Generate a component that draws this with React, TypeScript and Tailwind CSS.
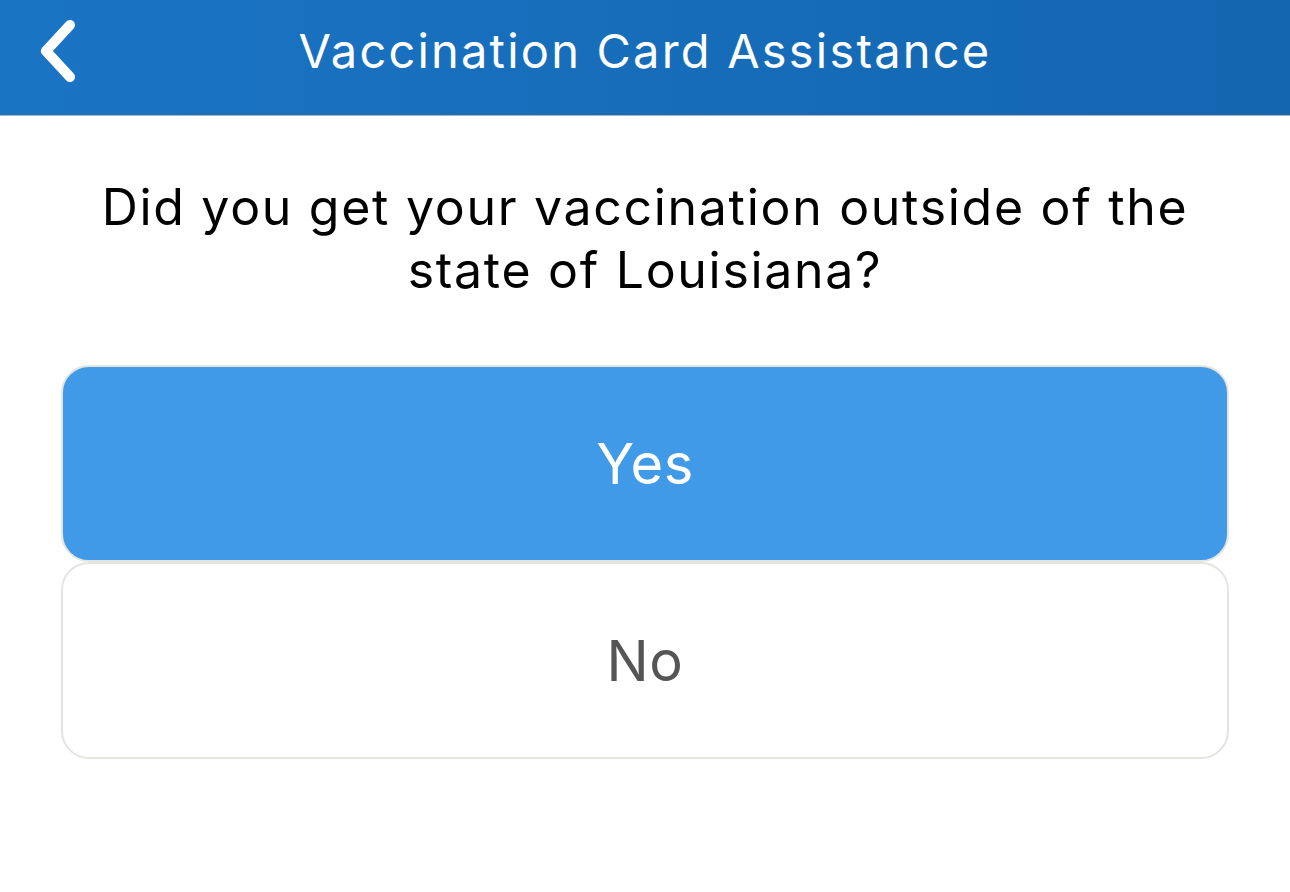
import React from "react";

const font = { fontFamily: "Inter, 'Noto Sans', sans-serif" };

function BackChevron() {
  return (
    <svg width="40" height="64" viewBox="0 0 40 64" fill="none" aria-hidden="true">
      <path
        d="M32 6 L8 32 L32 58"
        stroke="white"
        strokeWidth="10"
        strokeLinecap="round"
        strokeLinejoin="round"
      />
    </svg>
  );
}

export default function App() {
  return (
    <div className="w-[1290px] h-[892px] bg-white flex flex-col" style={font}>
      <header className="h-[116px] shrink-0 bg-gradient-to-r from-[#1a74c4] to-[#1366b0] border-b border-[#b4b4b4] flex items-center relative">
        <button className="absolute left-[38px] top-[19px] flex items-center">
          <BackChevron />
        </button>
        <h1 className="w-full text-center text-white text-[47px] leading-none tracking-[2.2px] -mt-[14px]">
          Vaccination Card Assistance
        </h1>
      </header>

      <main className="flex flex-col px-[61px] pt-[60px]">
        <p className="text-center text-black text-[50px] leading-[63px] tracking-[1.7px]">
          Did you get your vaccination outside of the state of Louisiana?
        </p>

        <div className="mt-[63px] flex flex-col">
          <button className="h-[197px] rounded-[28px] border-2 border-[#e4e4e1] bg-[#409ae8] text-white text-[56px] tracking-[0.5px] flex items-center justify-center">
            Yes
          </button>
          <button className="h-[197px] rounded-[28px] border-2 border-[#e4e4e1] bg-white text-[#555555] text-[56px] tracking-[0.5px] flex items-center justify-center">
            No
          </button>
        </div>
      </main>
    </div>
  );
}
